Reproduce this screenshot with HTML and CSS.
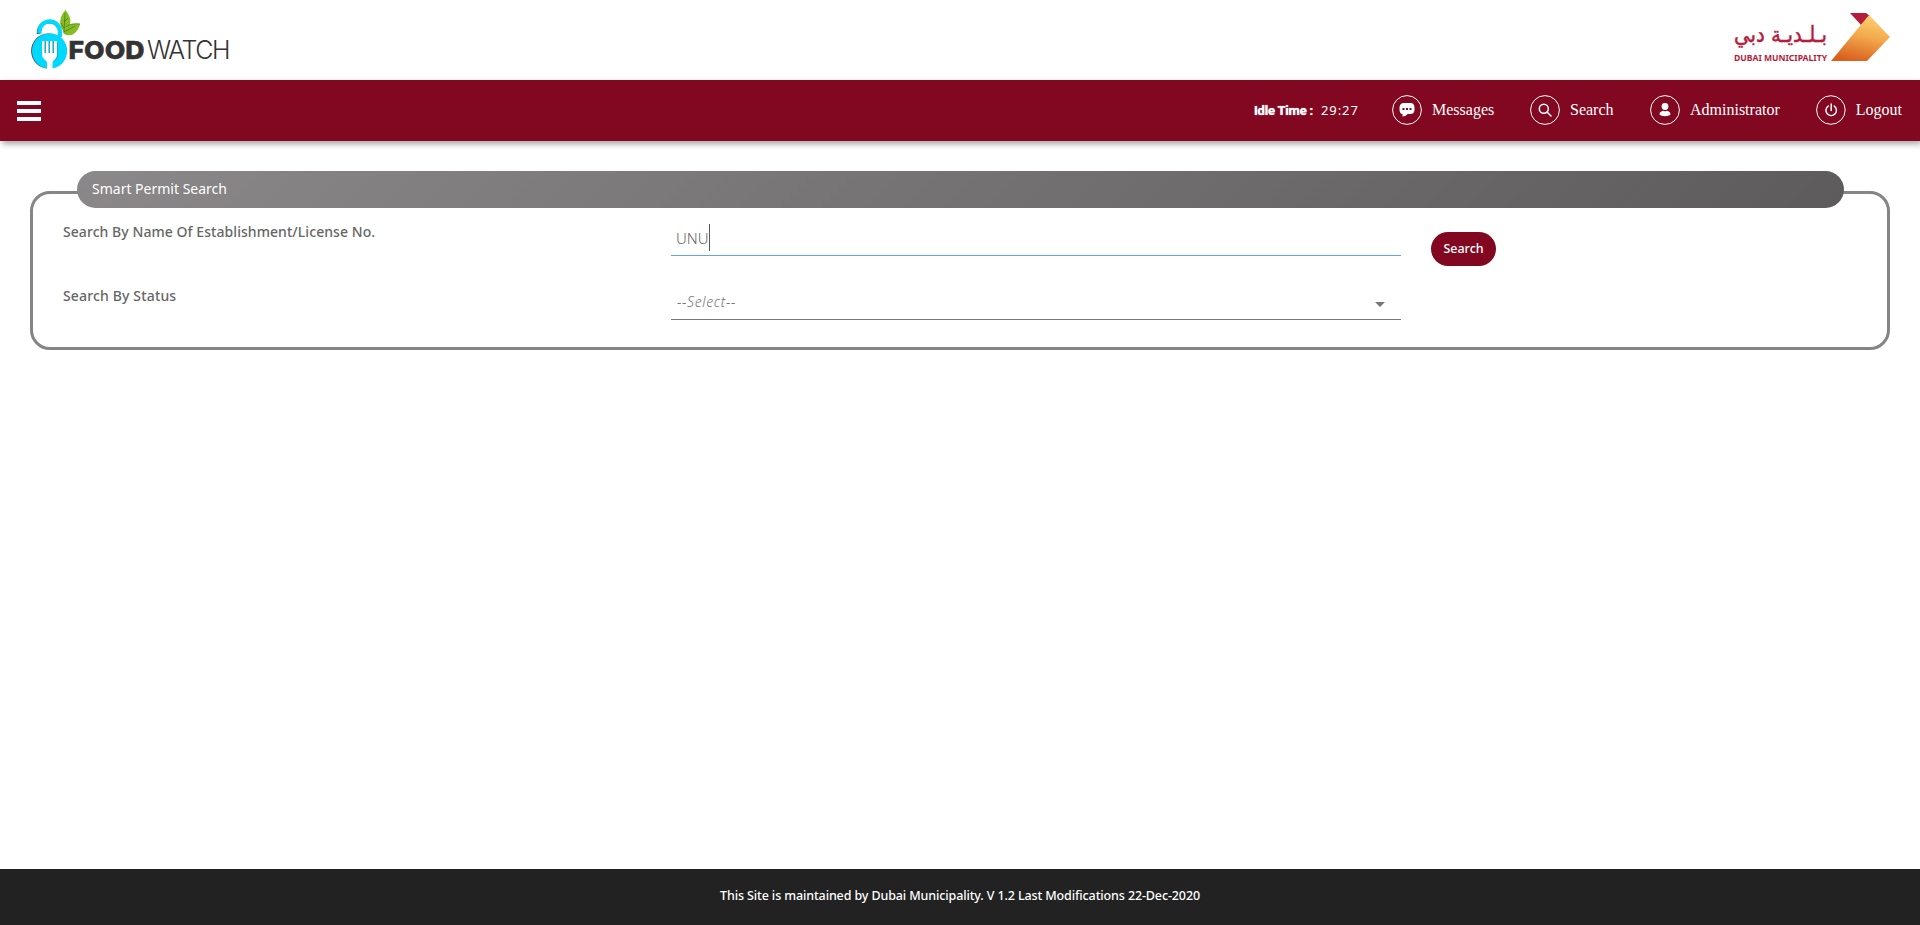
FILE: index.html
```html
<!DOCTYPE html>
<html lang="en">
<head>
<meta charset="utf-8">
<title>Smart Permit Search</title>
<link rel="stylesheet" href="styles.css">
</head>
<body>
<header class="brand">
  <svg class="logo-food" width="216" height="64" viewBox="0 0 216 64" role="img" aria-label="Food Watch">
    <path d="M8.500 26v-2a10.800 10.800 0 0 1 20 -5" fill="none" stroke="#35565c" stroke-width="3.500"/>
    <path d="M9.500 25.500V23.500a10.200 10.200 0 0 1 20.400 0V29" fill="none" stroke="#00d9ff" stroke-width="4.200"/>
    <circle cx="18.700" cy="43" r="17.600" fill="#35565c"/>
    <circle cx="19.600" cy="43" r="17.600" fill="#00d9ff"/>
    <path d="M12 33h15v14c0 4-4.500 5-4.500 8v7h-5.500v-7c0-3-5-4-5-8z" fill="#fff"/>
    <path d="M15.200 33v12M19.200 33v12M23.200 33v12" stroke="#18a9c2" stroke-width="1.500" fill="none"/>
    <path d="M27.300 34v14c0 2-1 3-2.500 4.500" stroke="#4f7880" stroke-width=".6" fill="none"/>
    <path d="M32 21C28 14 31 7 35.500 2c4 5 7 11 3 17l-5 4z" fill="#86bd25"/>
    <path d="M33 24c2-8 10-9 17-8-2 8-8 14-16 10z" fill="#86bd25"/>
    <path d="M35 5l-1 19 11-6M34 20l-3-5M34 14l4-4M50 16c-6-.5-11 0-14 3" stroke="#50791e" stroke-width=".8" fill="none"/>
    <text class="word-food" x="38.500" y="50.500" textLength="76" lengthAdjust="spacingAndGlyphs">FOOD</text>
    <text class="word-watch" x="117" y="50.500" textLength="83.500" lengthAdjust="spacing">WATCH</text>
  </svg>
  <svg class="logo-city" width="160" height="56" viewBox="0 0 160 56" role="img" aria-label="Dubai Municipality">
    <defs><linearGradient id="amber" x1=".65" y1="0" x2=".35" y2="1"><stop offset="0" stop-color="#ffd071"/><stop offset=".45" stop-color="#f2a94c"/><stop offset="1" stop-color="#d95f1d"/></linearGradient></defs>
    <path d="M120 5h16l4 3-9 9z" fill="#b51c3c"/>
    <path d="M139 7l21 22-23 24H101z" fill="url(#amber)"/>
    <text class="word-arabic" x="97" y="33.500" direction="rtl" textLength="93" lengthAdjust="spacingAndGlyphs">بـلـديـة دبي</text>
    <text class="word-city" x="4" y="53" textLength="93" lengthAdjust="spacingAndGlyphs">DUBAI MUNICIPALITY</text>
  </svg>
</header>
<nav class="bar">
  <button class="menu" aria-label="Menu"><i></i><i></i><i></i></button>
  <div class="idle"><b>Idle Time :</b><span>29:27</span></div>
  <a class="item messages"><svg width="30" height="30" viewBox="0 0 30 30"><circle class="ring" cx="15" cy="15" r="14.400"/><path d="M12 8h6.500c2.800 0 4 2 4 4.500v2c0 3-1.500 4.500-4 4.500h-3c-1 1.500-2.500 2.300-5 2.500V19c-2 0-3-2-3-4.500v-2c0-2.500 1.500-4.500 4.500-4.500z" fill="#fff"/><path d="M10.500 13h2v2h-2zM14 13h2v2h-2zM17.500 13h2v2h-2z" fill="#820821"/></svg><span>Messages</span></a>
  <a class="item search"><svg width="30" height="30" viewBox="0 0 30 30"><circle class="ring" cx="15" cy="15" r="14.400"/><circle class="line" cx="13.800" cy="13.800" r="4.500"/><path class="line" d="M17 17l4 4"/></svg><span>Search</span></a>
  <a class="item admin"><svg width="30" height="30" viewBox="0 0 30 30"><circle class="ring" cx="15" cy="15" r="14.400"/><circle cx="15" cy="11.500" r="3.400" fill="#fff"/><path d="M9.500 19.500c0-2.500 1.500-3.300 3.700-3.800 1 .7 2.600.7 3.600 0 2.200.5 3.700 1.300 3.700 3.800-2 2.200-9 2.200-11 0z" fill="#fff"/></svg><span>Administrator</span></a>
  <a class="item logout"><svg width="30" height="30" viewBox="0 0 30 30"><circle class="ring" cx="15" cy="15" r="14.400"/><path class="line" d="M12.300 11a5.300 5.300 0 1 0 6 0M15.300 9v6.500"/></svg><span>Logout</span></a>
</nav>
<main>
  <section class="panel">
    <h1 class="title"><span>Smart Permit Search</span></h1>
    <form class="form">
      <div class="row">
        <label><span class="label-name">Search By Name Of Establishment/License No.</span></label>
        <div class="field active"><span class="typed">UNU</span><i class="caret"></i></div>
        <button class="go" type="button">Search</button>
      </div>
      <div class="row">
        <label><span class="label-status">Search By Status</span></label>
        <div class="field select"><span class="placeholder">--Select--</span><svg width="10" height="5" viewBox="0 0 10 5"><path d="M0 0h10L5 5z" fill="#777"/></svg></div>
      </div>
    </form>
  </section>
</main>
<footer><span>This Site is maintained by Dubai Municipality. V 1.2 Last Modifications 22-Dec-2020</span></footer>
</body>
</html>
```
FILE: styles.css
```css
* { box-sizing: border-box; }
body { margin: 0; height: 925px; display: flex; flex-direction: column; background: #fff; font-family: "Noto Sans", "Open Sans", sans-serif; overflow: hidden; }
button { border: 0; padding: 0; font-family: inherit; }
.brand { height: 80px; display: flex; justify-content: space-between; align-items: flex-start; padding: 8px 30px 0; }
.logo-city { display: block; }
.word-food { font: 800 25px Inter, sans-serif; fill: #333; stroke: #333; stroke-width: .5; }
.word-watch { font: 300 25px Inter, sans-serif; fill: #333; }
.word-arabic { font: 22px "DejaVu Sans", sans-serif; fill: #b51c3c; stroke: #b51c3c; stroke-width: .5; }
.word-city { font: 700 9px "Noto Sans", sans-serif; fill: #b51c3c; }
.bar { height: 61px; flex: none; display: flex; align-items: center; background: #820821; box-shadow: 2px 3px 6px rgba(0,0,0,.35); padding: 0 18px 1px 17px; color: #fff; }
.menu { width: 24px; display: grid; gap: 4px; background: none; margin: 1px auto 0 0; }
.menu i { height: 4px; background: #fff; }
.idle { display: flex; width: 138px; align-items: center; }
.idle b { width: 67px; font: 700 13px Roboto, sans-serif; letter-spacing: -.2px; text-shadow: 0 0 1px #fff; }
.idle span { font-size: 13px; letter-spacing: .9px; }
.item { display: flex; align-items: center; gap: 10px; font: 16px "Liberation Serif", serif; }
.item span { margin-top: -1px; }
.messages { width: 138px; }
.search { width: 120px; }
.admin { width: 166px; }
.logout { width: 86px; }
.ring { fill: none; stroke: #fff; stroke-width: 1; }
.line { fill: none; stroke: #fff; stroke-width: 1.500; stroke-linecap: round; }
main { flex: 1; padding: 30px 30px 0; }
.panel { margin-top: 20px; height: 159px; border: 3px solid #858585; border-radius: 20px; }
.title { height: 37px; margin: -23px 43px 0 44px; border-radius: 19px; background: linear-gradient(135deg, #8a8888, #5e5b5c); color: #fff; padding: 0 15px; font-size: 14px; font-weight: 400; line-height: 36px; }
.form { padding: 9px 30px 0; }
.row { height: 64px; display: grid; grid-template-columns: 608px 730px 95px; align-items: start; }
label { color: #666; font-size: 14px; font-weight: 500; line-height: 20px; padding-top: 5px; letter-spacing: .06px; }
.field { height: 39px; display: flex; align-items: center; padding: 3px 5px 0; border-bottom: 1px solid #777; color: #666; font-size: 15px; font-weight: 300; }
.active { border-color: #60a8dc; }
.caret { width: 1px; height: 27px; background: #555; }
.select { justify-content: space-between; padding-right: 16px; }
.select svg { margin-top: 6px; }
.placeholder { font-size: 14px; font-style: italic; color: #777; letter-spacing: .65px; padding-left: 1px; }
.go { width: 65px; height: 34px; margin: 15px 0 0 30px; padding-bottom: 1px; border-radius: 17px; background: #820821; color: #fff; font-size: 12.500px; font-weight: 500; }
.label-status { letter-spacing: .15px; }
footer { height: 56px; flex: none; background: #222; color: #fff; text-align: center; font-size: 12.500px; font-weight: 500; line-height: 54px; letter-spacing: -.12px; }
```
